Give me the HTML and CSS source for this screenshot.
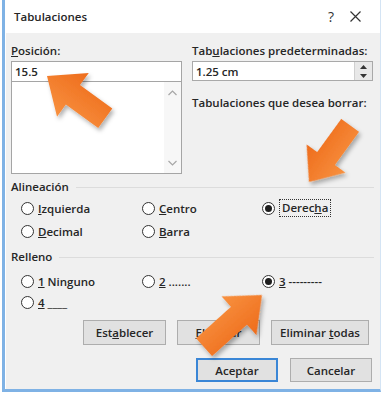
FILE: index.html
```html
<!DOCTYPE html>
<html lang="es">
<head>
    <meta charset="UTF-8">
    <meta name="viewport" content="width=device-width, initial-scale=1.0">
    <title>Tabulaciones</title>
    <link rel="stylesheet" href="styles.css">
</head>

<body>
    <div class="window">
        <div class="titlebar">
            <span class="title">Tabulaciones</span>
            <span class="help">?</span>
            <svg class="close" width="11" height="11" viewBox="0 0 11 11">
                <path d="M0.5 0.5 L10.5 10.5 M10.5 0.5 L0.5 10.5" stroke="#333" stroke-width="1.2" fill="none"/>
            </svg>
        </div>

        <div class="dialog-body">
            <div class="top">
                <div class="col">
                    <div class="lbl"><u>P</u>osición:</div>
                    <div class="pos-input">15.5</div>
                    <div class="pos-list">
                        <div class="scroll">
                            <svg width="9" height="6" viewBox="0 0 9 6"><path d="M0.5 5 L4.5 1 L8.5 5" stroke="#a6a6a6" stroke-width="1.2" fill="none"/></svg>
                            <svg width="9" height="6" viewBox="0 0 9 6"><path d="M0.5 1 L4.5 5 L8.5 1" stroke="#a6a6a6" stroke-width="1.2" fill="none"/></svg>
                        </div>
                    </div>
                </div>
                <div class="col">
                    <div class="lbl">Tab<u>u</u>laciones predeterminadas:</div>
                    <div class="spin">
                        <span>1.25 cm</span>
                        <div class="spin-btns">
                            <svg width="7" height="4" viewBox="0 0 7 4"><path d="M0 4 L3.5 0 L7 4 Z" fill="#333"/></svg>
                            <svg width="7" height="4" viewBox="0 0 7 4"><path d="M0 0 L3.5 4 L7 0 Z" fill="#333"/></svg>
                        </div>
                    </div>
                    <div class="lbl lbl-clear">Tabulaciones que desea borrar:</div>
                </div>
            </div>

            <div class="group-head">Alineación</div>
            <div class="radio-grid align">
                <div class="radio"><span class="dot"></span><span><u>I</u>zquierda</span></div>
                <div class="radio"><span class="dot"></span><span><u>C</u>entro</span></div>
                <div class="radio"><span class="dot checked"></span><span class="focus">Derec<u>h</u>a</span></div>
                <div class="radio"><span class="dot"></span><span><u>D</u>ecimal</span></div>
                <div class="radio"><span class="dot"></span><span><u>B</u>arra</span></div>
            </div>

            <div class="group-head fill-head">Relleno</div>
            <div class="radio-grid fill">
                <div class="radio"><span class="dot"></span><span><u>1</u> Ninguno</span></div>
                <div class="radio"><span class="dot"></span><span><u>2</u> .......</span></div>
                <div class="radio"><span class="dot checked"></span><span><u>3</u> ---------</span></div>
                <div class="radio"><span class="dot"></span><span><u>4</u> ____</span></div>
            </div>

            <div class="btn-row">
                <div class="btn"><span>Est<u>a</u>blecer</span></div>
                <div class="btn"><span><u>E</u>liminar</span></div>
                <div class="btn wide"><span>Eliminar <u>t</u>odas</span></div>
            </div>
            <div class="btn-row main">
                <div class="btn default"><span>Aceptar</span></div>
                <div class="btn"><span>Cancelar</span></div>
            </div>
        </div>
    </div>

    <!-- callout arrows drawn over the dialog -->
    <svg class="arrows" width="384" height="395" viewBox="0 0 384 395">
        <defs>
            <linearGradient id="orange" x1="0" y1="0" x2="0" y2="1">
                <stop offset="0" stop-color="#f8913f"/>
                <stop offset="1" stop-color="#ee6c1c"/>
            </linearGradient>
            <filter id="shade" x="-30%" y="-30%" width="160%" height="160%">
                <feDropShadow dx="2" dy="3" stdDeviation="2" flood-color="#000" flood-opacity="0.3"/>
            </filter>
        </defs>
        <g fill="url(#orange)" filter="url(#shade)">
            <polygon transform="translate(47 76) rotate(216)" points="0,0 -32,-27 -32,-12 -72,-12 -72,12 -32,12 -32,27"/>
            <polygon transform="translate(309 182) rotate(126)" points="0,0 -29,-24 -29,-11 -70,-11 -70,11 -29,11 -29,24"/>
            <polygon transform="translate(262 295) rotate(-42)" points="0,0 -31,-26 -31,-12 -78,-12 -78,12 -31,12 -31,26"/>
        </g>
    </svg>
</body>
</html>
```

FILE: styles.css
```css
/* Page and window frame */
body {
    margin: 0;
    width: 384px;
    height: 395px;
    position: relative;
    background-color: #fff;
    font-family: "Open Sans", "Noto Sans", sans-serif;
    font-size: 11.5px;
    font-weight: 600;
    color: #262626;
    overflow: hidden;
}

.window {
    box-sizing: border-box;
    margin-left: 2px;
    width: 379px;
    height: 392px;
    border-left: 3px solid #7fb2e5;
    border-bottom: 3px solid #7fb2e5;
    border-right: 1px solid #d4e4f4;
    display: flex;
    flex-direction: column;
}

/* Title bar */
.titlebar {
    height: 33px;
    background-color: #fff;
    display: flex;
    align-items: center;
    padding-left: 9px;
}

.title {
    flex: 1;
    line-height: 16px;
}

.help {
    font-size: 14px;
    font-weight: 400;
    color: #333;
    margin-right: 16px;
}

.close {
    margin-right: 19px;
}

/* Dialog content */
.dialog-body {
    flex: 1;
    background-color: #f0f0f0;
    border-left: 1px solid #fff;
    padding: 10px 6px 0 5px;
}

.top {
    display: grid;
    grid-template-columns: 171px 181px;
    column-gap: 10px;
    height: 131px;
    margin-bottom: 5px;
}

.lbl {
    line-height: 16px;
    height: 16px;
    margin-bottom: 2px;
    white-space: nowrap;
}

.lbl-clear {
    margin-top: 14px;
}

.pos-input {
    box-sizing: border-box;
    height: 21px;
    border: 1px solid #a5a5a5;
    background-color: #fff;
    padding-left: 3px;
    line-height: 19px;
}

.pos-list {
    box-sizing: border-box;
    height: 92px;
    border: 1px solid #a5a5a5;
    border-top: none;
    background-color: #fff;
    display: flex;
    justify-content: flex-end;
}

.scroll {
    width: 17px;
    background-color: #f7f7f7;
    display: flex;
    flex-direction: column;
    justify-content: space-between;
    align-items: center;
    padding: 8px 0 7px;
}

.spin {
    box-sizing: border-box;
    height: 20px;
    border: 1px solid #a9a9a9;
    background-color: #fff;
    display: flex;
    align-items: center;
    padding-left: 3px;
}

.spin span {
    flex: 1;
}

.spin-btns {
    width: 17px;
    height: 18px;
    background-color: #e8e8e8;
    border-left: 1px solid #d0d0d0;
    display: flex;
    flex-direction: column;
    justify-content: space-around;
    align-items: center;
}

/* Group headings with rule */
.group-head {
    display: flex;
    align-items: center;
    height: 16px;
    line-height: 16px;
}

.group-head::after {
    content: "";
    flex: 1;
    height: 1px;
    background-color: #dcdcdc;
    margin-left: 7px;
}

.fill-head {
    margin-top: 7px;
}

/* Radio buttons */
.radio-grid {
    display: grid;
    grid-template-columns: 121px 120px 1fr;
    padding-left: 10px;
}

.radio-grid.align {
    margin-top: 2px;
    grid-auto-rows: 22px;
    row-gap: 1px;
}

.radio-grid.fill {
    margin-top: 6px;
    grid-auto-rows: 21px;
}

.radio {
    display: flex;
    align-items: center;
    white-space: nowrap;
}

.dot {
    box-sizing: border-box;
    width: 13px;
    height: 13px;
    border: 1px solid #333;
    border-radius: 50%;
    background-color: #fff;
    margin-right: 4px;
    display: flex;
    align-items: center;
    justify-content: center;
}

.dot.checked::after {
    content: "";
    width: 7px;
    height: 7px;
    border-radius: 50%;
    background-color: #1e1e1e;
}

.focus {
    border: 1px dotted #333;
    padding: 0 2px;
    line-height: 16px;
}

/* Buttons */
.btn-row {
    display: flex;
    justify-content: flex-end;
    gap: 11px;
    margin-top: 7px;
    padding-right: 5px;
}

.btn-row.main {
    margin-top: 13px;
    gap: 12px;
    padding-right: 2px;
}

.btn {
    box-sizing: border-box;
    width: 83px;
    height: 25px;
    background-color: #e1e1e1;
    border: 1px solid #adadad;
    display: flex;
    align-items: center;
    justify-content: center;
}

.btn.wide {
    width: 98px;
}

.btn-row.main .btn {
    width: 82px;
    height: 24px;
}

.btn.default {
    border: 2px solid #3a86d6;
}

/* Arrows overlay */
.arrows {
    position: absolute;
    top: 0;
    left: 0;
    pointer-events: none;
}
```
